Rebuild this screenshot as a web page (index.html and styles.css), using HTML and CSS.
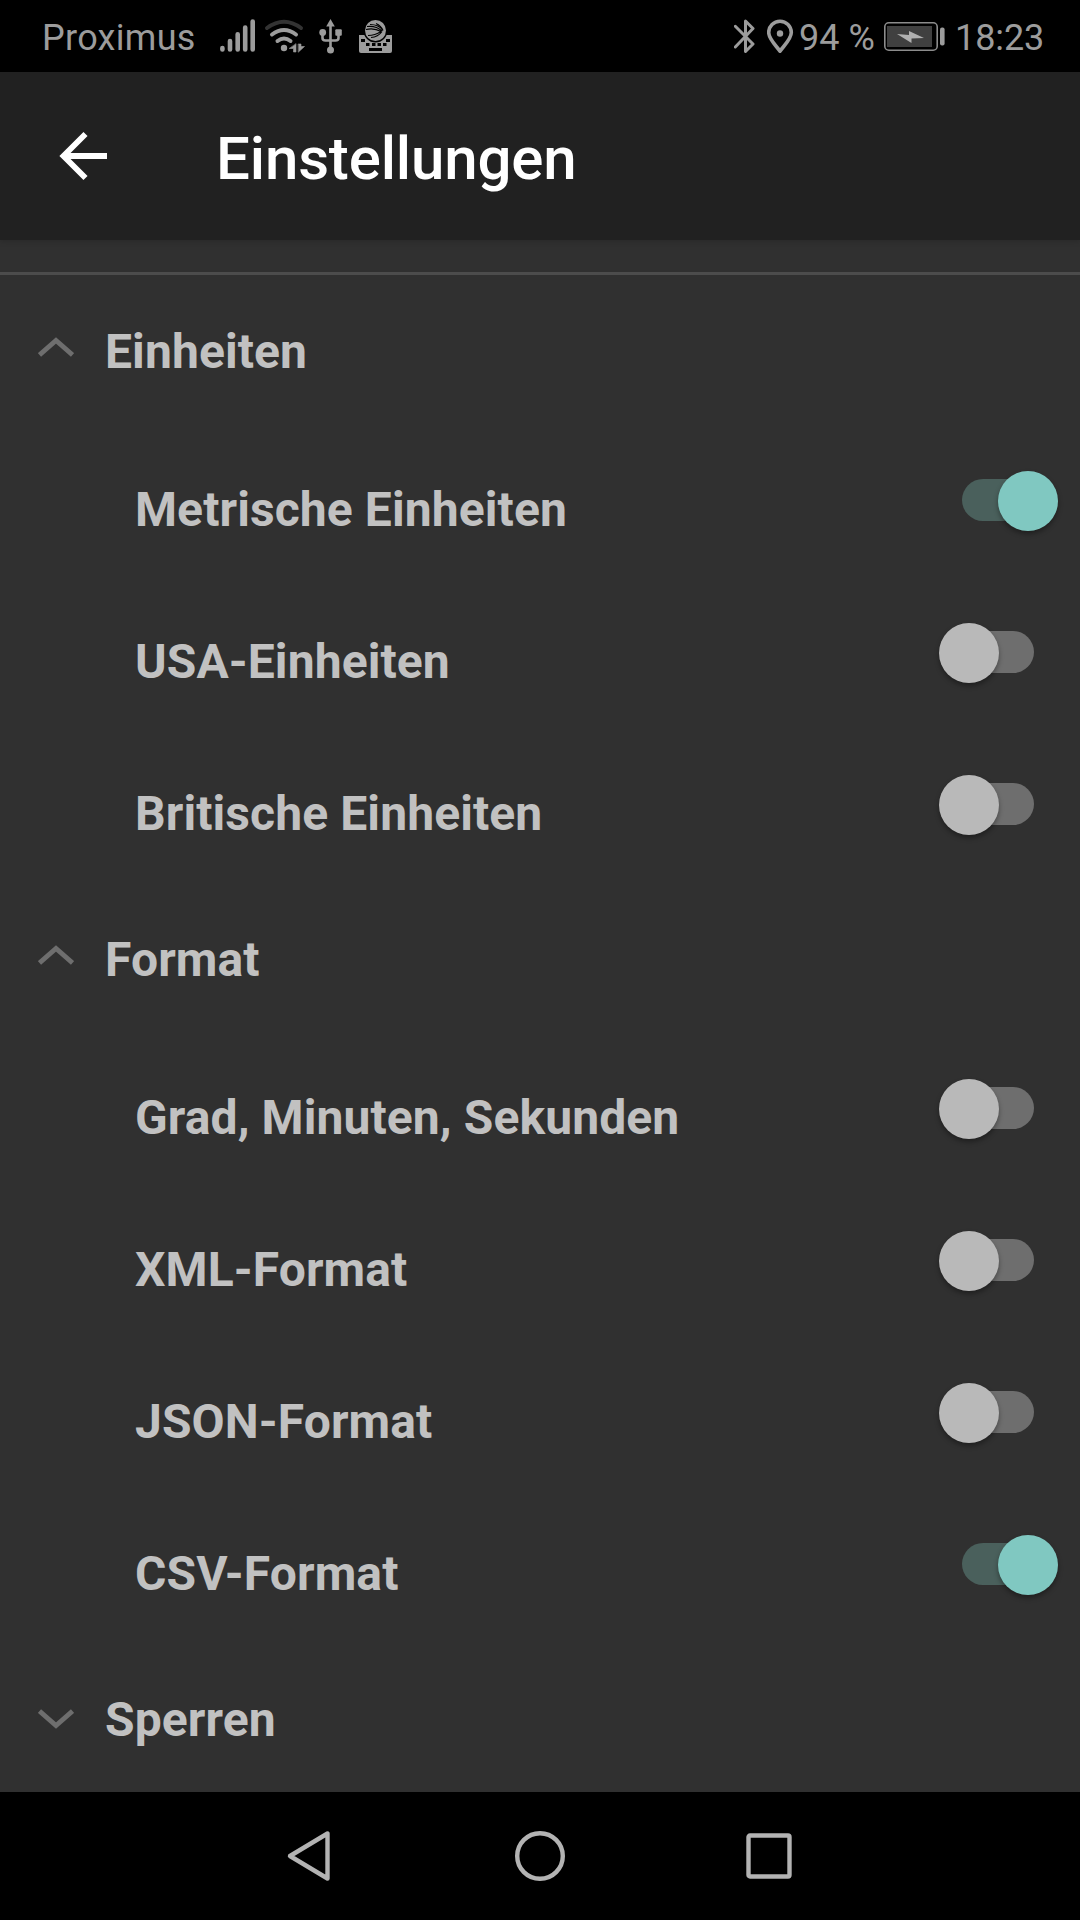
FILE: index.html
```html
<!DOCTYPE html>
<html lang="de">
<head>
<meta charset="utf-8">
<title>Einstellungen</title>
<link rel="stylesheet" href="styles.css">
</head>
<body>
<div class="screen">
  <div class="status">
    <span class="carrier">Proximus</span>
    <svg class="signal" width="36" height="72" viewBox="220 0 36 72" stroke="#9c9c9c" stroke-width="4.6" stroke-linecap="round"><path d="M222.4 48v1.5M230 41v8.5M237.7 34.3v15.2M245.2 27.5v22M252.7 21.5v28"/></svg>
    <svg class="wifi" width="42" height="72" viewBox="264 0 42 72" fill="none" stroke="#9c9c9c" stroke-width="4" stroke-linecap="round"><path stroke="#333" d="M267 28Q284 15.500 301 28"/><path d="M272 34.500Q284 25.500 296 34.500M277.500 41Q284 36 290.500 41"/><circle cx="284" cy="48" r="3.200" fill="#9c9c9c" stroke="none"/><path d="M296 44v8h-2.500v-3.500h-4zM298.500 44h2.500v2.500h3.500l-6 5.500z" fill="#9c9c9c" stroke="#9c9c9c" stroke-width=".6"/></svg>
    <svg class="usb" width="24" height="72" viewBox="319 0 24 72" fill="none" stroke="#9c9c9c" stroke-width="2.6"><path d="M330.500 24v25M322.500 33v5q0 2.500 3 2.500h10q3 0 3-2.500v-5"/><path d="M330.500 19l4.300 7.500h-8.600z" fill="#9c9c9c" stroke="none"/><circle cx="322.700" cy="32.500" r="3.400" fill="#9c9c9c" stroke="none"/><rect x="335.300" y="29.300" width="6.500" height="6.500" rx="1" fill="#9c9c9c" stroke="none"/><circle cx="330.500" cy="50" r="3.500" fill="#9c9c9c" stroke="none"/></svg>
    <svg class="keyboard" width="34" height="72" viewBox="359 0 34 72"><path fill="#9c9c9c" d="M359 35h33v16q0 2-2 2h-29q-2 0-2-2z"/><g fill="#000"><circle cx="375.500" cy="30.500" r="12"/><path d="M361 39h4v3h-4zM386 39h4v3h-4zM366 43h3.500v3h-3.500zM372 43h3.500v3h-3.500zM377.500 43h3.500v3h-3.500zM383 43h3.500v3H383zM369 48h13v3h-13z"/></g><circle cx="375.500" cy="30.500" r="10.500" fill="#9c9c9c"/><path fill="none" stroke="#000" stroke-width="1.200" d="M370 24.500q9 0 13 6M367 26.500q9-1 15 4.500M366 29.500q8-2 15 2M368 35.500q7 0 13-4M371 37.500q7-.5 11-6M376 23.500q5 2 7 7"/></svg>
    <svg class="bluetooth" width="22" height="72" viewBox="734 0 22 72" fill="none" stroke="#9c9c9c" stroke-width="3" stroke-linecap="round" stroke-linejoin="round"><path d="M735.300 26.300L753 44l-7.500 7.500V21l7.500 7.500L735.300 47"/></svg>
    <svg class="pin" width="27" height="72" viewBox="767 0 27 72"><path fill="none" stroke="#9c9c9c" stroke-width="3.600" stroke-linejoin="round" d="M780 51.200C776 45.500 768.700 39 768.700 32.500a11.300 11.300 0 0 1 22.600 0C791.300 39 784 45.500 780 51.200z"/><circle cx="780" cy="33.500" r="3.200" fill="#9c9c9c"/></svg>
    <span class="charge">94 %</span>
    <svg class="battery" width="62" height="72" viewBox="884 0 62 72"><rect x="884.800" y="22.800" width="52.400" height="27.400" rx="4" fill="none" stroke="#8c8c8c" stroke-width="1.600"/><rect x="887" y="26" width="45" height="21" fill="#404040"/><path fill="#b0b0b0" d="M897 34l12 1v-4l15 7-12.500.5V43z"/><rect x="940" y="27.500" width="4.600" height="18" rx="2" fill="#9c9c9c"/></svg>
    <span class="clock">18:23</span>
  </div>
  <header class="appbar">
    <svg class="back" width="52" height="52" viewBox="0 0 52 52" fill="none" stroke="#fff" stroke-width="5.800"><path d="M50 26H7M28.500 4L6.500 26l22 22"/></svg>
    <h1 class="title">Einstellungen</h1>
  </header>
  <main class="list">
    <div class="divider"></div>
    <div class="row group"><svg class="chevron" width="36" height="20" viewBox="0 0 36 20"><path d="M1.500 18L18 3.500 34.500 18"/></svg><h2 class="label">Einheiten</h2></div>
    <div class="row item"><span class="label">Metrische Einheiten</span><span class="switch on"><span class="thumb"></span></span></div>
    <div class="row item"><span class="label">USA-Einheiten</span><span class="switch"><span class="thumb"></span></span></div>
    <div class="row item"><span class="label">Britische Einheiten</span><span class="switch"><span class="thumb"></span></span></div>
    <div class="row group"><svg class="chevron" width="36" height="20" viewBox="0 0 36 20"><path d="M1.500 18L18 3.500 34.500 18"/></svg><h2 class="label">Format</h2></div>
    <div class="row item"><span class="label">Grad, Minuten, Sekunden</span><span class="switch"><span class="thumb"></span></span></div>
    <div class="row item"><span class="label">XML-Format</span><span class="switch"><span class="thumb"></span></span></div>
    <div class="row item"><span class="label">JSON-Format</span><span class="switch"><span class="thumb"></span></span></div>
    <div class="row item"><span class="label">CSV-Format</span><span class="switch on"><span class="thumb"></span></span></div>
    <div class="row group closed"><svg class="chevron" width="36" height="20" viewBox="0 0 36 20"><path d="M1.500 2L18 16.500 34.500 2"/></svg><h2 class="label">Sperren</h2></div>
  </main>
  <nav class="nav">
    <svg width="52" height="52" viewBox="0 0 52 52"><path d="M42.500 3.500v45L5 26z"/></svg>
    <svg width="52" height="52" viewBox="0 0 52 52"><circle cx="26" cy="26" r="22.800"/></svg>
    <svg width="52" height="52" viewBox="0 0 52 52"><rect x="5.500" y="5.500" width="41" height="41" rx="1.500"/></svg>
  </nav>
</div>
</body>
</html>
```

FILE: styles.css
```css
* { box-sizing: border-box; }
body { margin: 0; background: #000; font-family: Roboto, sans-serif; }
.screen { width: 1080px; height: 1920px; display: flex; flex-direction: column; overflow: hidden; }
svg { display: block; flex: none; }

.status { height: 72px; flex: none; display: flex; align-items: center; background: #000; color: #9c9c9c; font-size: 36px; line-height: 72px; white-space: nowrap; padding-left: 42px; }
.carrier { width: 178px; padding-top: 3px; letter-spacing: 0.3px; }
.wifi { margin-left: 8px; }
.usb { margin-left: 13px; }
.keyboard { margin-left: 16px; }
.bluetooth { margin-left: 341px; }
.pin { margin-left: 11px; }
.charge { width: 85px; margin-left: 5px; padding-top: 3px; }
.clock { margin-left: 9px; padding-top: 3px; letter-spacing: -0.1px; }

.appbar { height: 168px; flex: none; display: flex; align-items: center; background: #212121; padding-left: 57px; position: relative; box-shadow: 0 1px 6px rgba(0, 0, 0, 0.18); }
.title { margin: 6px 0 0 107px; font-size: 60px; line-height: 72px; font-weight: 500; letter-spacing: -0.15px; color: #fff; }

.list { height: 1552px; flex: none; background: #303030; padding-top: 32px; overflow: hidden; }
.divider { height: 3px; background: #4c4c4c; }
.row { height: 152px; display: flex; align-items: center; }
.label { margin: 0; font-size: 48px; line-height: 56px; font-weight: 700; letter-spacing: 0.1px; color: #c1c1c1; white-space: nowrap; }
.group { padding-left: 38px; }
.group .label { margin-left: 31px; padding-top: 1px; }
.chevron { fill: none; stroke: #6e6e6e; stroke-width: 4.8; margin-bottom: 9px; }
.closed .chevron { margin-bottom: 0; }
.item { justify-content: space-between; padding: 0 46px 0 135px; }
.item .label { padding-top: 13px; }
.switch { width: 72px; height: 42px; border-radius: 21px; background: #6e6e6e; display: flex; align-items: center; margin-bottom: 6px; }
.thumb { width: 60px; height: 60px; flex: none; border-radius: 50%; background: #b9b9b9; margin: 1px 0 0 -23.5px; box-shadow: 0 3px 5px rgba(0, 0, 0, 0.35); }
.switch.on { background: #4a605c; }
.on .thumb { background: #80c8c1; margin-left: 35.5px; }

.nav { height: 128px; flex: none; display: flex; align-items: center; justify-content: center; gap: 177px; background: #000; }
.nav svg { fill: none; stroke: #b3b3b3; stroke-width: 4.4; stroke-linejoin: round; }
```
